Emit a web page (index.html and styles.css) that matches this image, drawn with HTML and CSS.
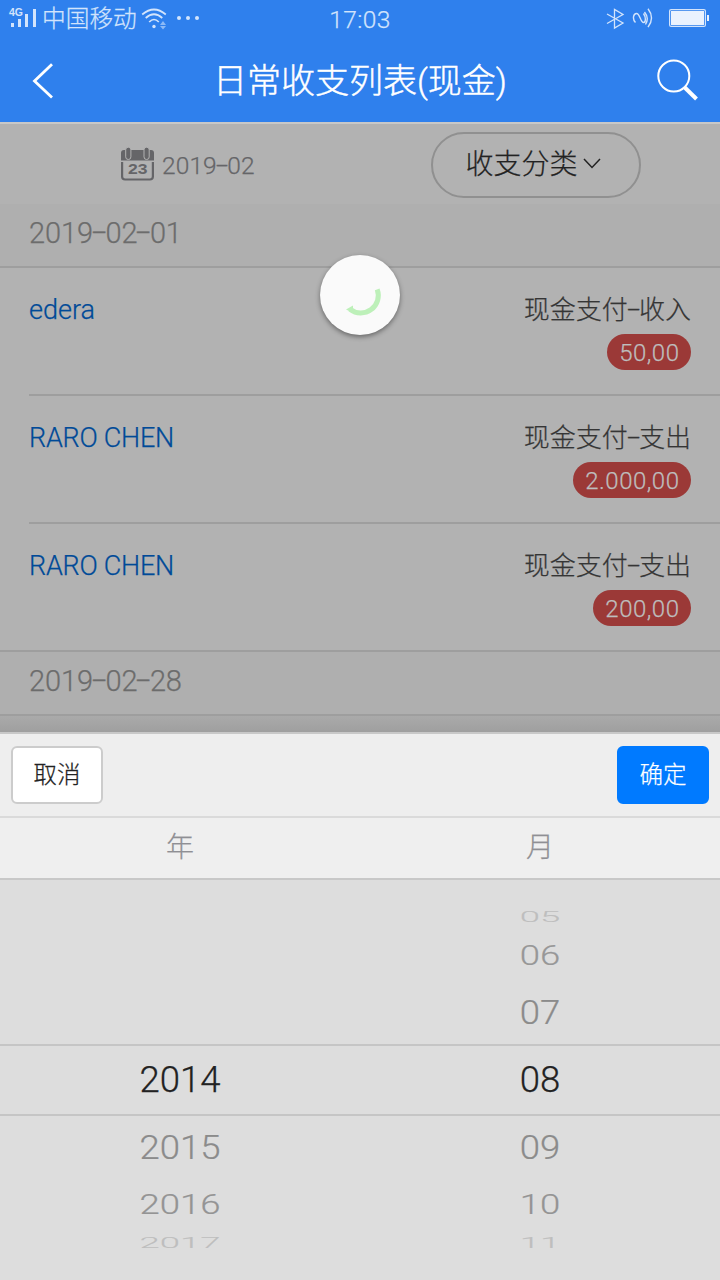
FILE: index.html
```html
<!DOCTYPE html>
<html lang="zh-CN">
<head>
<meta charset="utf-8">
<title>日常收支列表(现金)</title>
<link rel="stylesheet" href="styles.css">
</head>
<body>
<div class="screen">
  <header class="top">
    <div class="status">
      <div class="status-left">
        <svg class="signal" width="30" height="24" viewBox="0 0 30 24">
          <text class="net" x="1" y="10" textLength="14" lengthAdjust="spacingAndGlyphs">4G</text>
          <path d="M3 17h3v4H3zM10 13h3v8h-3zM17 8h3v13h-3zM25 3h3v18h-3z" fill="currentColor"/>
        </svg>
        <span class="carrier">中国移动</span>
        <svg class="wifi" width="27" height="24" viewBox="0 0 27 24" fill="none" stroke="currentColor" stroke-width="1.7">
          <path d="M1.2 8.500Q13 -1.500 24.800 8.500M4.700 12Q13 4.500 21.300 12M8.200 16Q13 11 17.800 16"/>
          <circle cx="13" cy="20.500" r="1.700" fill="currentColor" stroke="none"/>
          <path class="faint" d="M22 15l3 4h-6zM22 23.500l3-3.500h-6z"/>
        </svg>
        <svg class="dots" width="24" height="6" viewBox="0 0 24 6" fill="currentColor"><circle cx="3" cy="3" r="2"/><circle cx="12" cy="3" r="2"/><circle cx="21" cy="3" r="2"/></svg>
      </div>
      <div class="clock">17:03</div>
      <div class="status-right">
        <svg width="19" height="22" viewBox="0 0 19 22" fill="none" stroke="currentColor" stroke-width="1.300"><path d="M1 6l16 9-8.500 5V1.500L17 6.500 1 15.500"/></svg>
        <svg class="nfc" width="23" height="22" viewBox="0 0 23 22" fill="none" stroke="currentColor" stroke-width="1.400"><path d="M3.500 14.500C0 11 1.500 5.500 4.500 5.500c3.500 0 4 9 7 9 2.500 0 2.500-5.500 0-9M12.500 4q5 6 1 12.500M16 .8q7 9 0 18.400"/></svg>
        <svg class="battery" width="40" height="18" viewBox="0 0 40 18"><rect x=".6" y=".6" width="35.800" height="16.800" rx="1.500" fill="none" stroke="currentColor" stroke-width="1.200"/><path d="M2 2h33v14H2zM38 6h2v6h-2z" fill="#eaf2fe"/></svg>
      </div>
    </div>
    <div class="nav">
      <svg class="back" width="22" height="36" viewBox="0 0 22 36" fill="none" stroke="#fff" stroke-width="2.800"><path d="M20 1.200L2.500 18 20 34.500"/></svg>
      <h1 class="title">日常收支列表(现金)</h1>
      <svg class="search" width="42" height="42" viewBox="0 0 42 42" fill="none" stroke="#fff"><circle cx="16.800" cy="17" r="15.500" stroke-width="2"/><path d="M27.500 28.200L39.500 40" stroke-width="4"/></svg>
    </div>
  </header>

  <main class="list">
    <div class="filters">
      <div class="month">
        <svg width="34" height="34" viewBox="0 0 34 34">
          <path d="M3 3h27q3 0 3 3v7.500H0V6q0-3 3-3z" fill="#656568"/>
          <path d="M1.100 15v14.500q0 3 3 3h24.800q3 0 3-3V15" fill="none" stroke="#656568" stroke-width="2.200"/>
          <rect x="4.700" y=".2" width="5.200" height="12.300" rx="2.600" fill="#656568" stroke="#b2b2b2"/>
          <rect x="23" y=".2" width="5.200" height="12.300" rx="2.600" fill="#656568" stroke="#b2b2b2"/>
          <text class="cal-day" x="7" y="26.700" textLength="19.500" lengthAdjust="spacingAndGlyphs">23</text>
        </svg>
        <span class="month-text">2019<i class="dash">-</i>02</span>
      </div>
      <button class="category">收支分类<svg width="18" height="11" viewBox="0 0 18 11" fill="none" stroke="#222" stroke-width="1.500"><path d="M1 1l8 8.500L17 1"/></svg></button>
    </div>
    <div class="group">2019<i class="dash">-</i>02<i class="dash">-</i>01</div>
    <div class="row"><div class="cell"><span class="name">edera</span><div class="info"><span class="kind">现金支付<i class="dash">-</i>收入</span><span class="badge">50,00</span></div></div></div>
    <div class="row"><div class="cell"><span class="name caps">RARO CHEN</span><div class="info"><span class="kind">现金支付<i class="dash">-</i>支出</span><span class="badge">2.000,00</span></div></div></div>
    <div class="row last"><div class="cell"><span class="name caps">RARO CHEN</span><div class="info"><span class="kind">现金支付<i class="dash">-</i>支出</span><span class="badge">200,00</span></div></div></div>
    <div class="group">2019<i class="dash">-</i>02<i class="dash">-</i>28</div>
    <div class="shade"></div>
    <div class="spinner"><svg width="80" height="80" viewBox="0 0 80 80"><path d="M57.200 34.300A17.500 17.500 0 0 1 30 54.200" fill="none" stroke="#bdf0b9" stroke-width="5"/><path d="M26 54.500L33 50.500V58z" fill="#bdf0b9"/></svg></div>
  </main>

  <section class="picker">
    <div class="actions"><button class="btn">取消</button><button class="btn ok">确定</button></div>
    <div class="heads"><span>年</span><span>月</span></div>
    <div class="wheels">
      <div class="wheel years">
        <div class="item now">2014</div><div class="item n1">2015</div><div class="item n2">2016</div><div class="item n3">2017</div>
      </div>
      <div class="wheel">
        <div class="item p3">05</div><div class="item p2">06</div><div class="item p1">07</div><div class="item now">08</div><div class="item n1">09</div><div class="item n2">10</div><div class="item n3">11</div>
      </div>
    </div>
  </section>
</div>
</body>
</html>
```
FILE: styles.css
```css
* { box-sizing: border-box; }
body { margin: 0; }
.screen {
  width: 720px; height: 1280px; overflow: hidden;
  display: flex; flex-direction: column;
  background: #b2b2b2;
  font-family: Roboto, "Noto Sans CJK SC", sans-serif;
  font-weight: 300;
  -webkit-text-stroke: .25px;
}
button { font: inherit; padding: 0; }
svg { display: block; flex: none; }
svg text { -webkit-text-stroke: 0; }

.top { height: 124px; background: #2f80ed; border-bottom: 2px solid #c8c8c8; color: #fff; }
.status { height: 38px; display: grid; grid-template-columns: 1fr auto 1fr; color: #d3e4fc; }
.status-left { display: flex; padding-left: 8px; }
.signal { margin-top: 6px; }
.net { font: 700 11px "Liberation Sans", sans-serif; fill: currentColor; }
.carrier { margin-left: 4px; font-size: 23.700px; line-height: 38px; white-space: nowrap; }
.wifi { margin: 6px 0 0 4px; }
.faint { fill: #8dbaf6; stroke: none; }
.dots { margin: 15px 0 0 8px; }
.clock { font-size: 24.500px; line-height: 40px; letter-spacing: .4px; }
.status-right { display: flex; justify-content: flex-end; padding: 8px 11px 0 0; }
.nfc { margin-left: 7px; }
.battery { margin: 1px 0 0 14px; }
.nav { height: 84px; display: flex; justify-content: space-between; padding: 0 21px 0 32px; }
.back { margin-top: 25px; }
.title { margin: 0; padding-left: 9px; font-size: 34px; font-weight: 300; line-height: 86px; -webkit-text-stroke: .45px; }
.search { margin-top: 21px; }

.list { position: relative; height: 608px; display: flex; flex-direction: column; }
.filters { height: 80px; flex: none; display: grid; grid-template-columns: 431px 210px; }
.month { display: flex; padding: 23px 0 0 121px; color: #656568; }
.month-text { margin-left: 7px; font-size: 24.500px; line-height: 37px; letter-spacing: .1px; }
.cal-day { font: 700 15px "Liberation Sans", sans-serif; fill: #656568; }
.category {
  display: flex; justify-content: center; height: 66px; margin-top: 8px; padding-right: 6px;
  border: 2px solid #909090; border-radius: 33px; background: none;
  color: #222; font-size: 28px; line-height: 61px;
}
.category svg { margin: 24px 0 0 5px; }
.dash { display: inline-block; font-style: normal; width: .43em; text-align: center; transform: translateY(-.03em) scaleX(1.800); }
.group {
  height: 64px; flex: none; padding-left: 29px; background: #afafaf;
  border-bottom: 2px solid #9e9e9e; color: #6c6c6c;
  font-size: 29px; line-height: 58px; letter-spacing: -.1px;
}
.row { height: 128px; flex: none; padding-left: 29px; }
.cell { height: 128px; display: flex; justify-content: space-between; padding: 22px 29px 0 0; border-bottom: 2px solid #9e9e9e; }
.last { padding-left: 0; }
.last .cell { padding-left: 29px; }
.name { color: #004a98; font-size: 27px; line-height: 40px; }
.caps { letter-spacing: -.25px; }
.info { display: flex; flex-direction: column; align-items: flex-end; }
.kind { height: 38px; color: #353535; font-size: 26px; line-height: 40px; }
.badge {
  height: 36px; margin-top: 6px; padding: 0 11.500px 0 12px; border-radius: 18px;
  background: #9b3937; color: #bebebe; font-size: 24px; line-height: 38px; letter-spacing: .5px;
}
.shade { flex: 1; background: linear-gradient(#aaa, #9f9f9f); }
.spinner {
  position: absolute; left: 320px; top: 131px; width: 80px; height: 80px;
  border-radius: 50%; background: #fafafa; box-shadow: 0 2px 5px rgba(0,0,0,.42);
}

.picker { height: 548px; }
.actions { height: 86px; display: flex; justify-content: space-between; padding: 12px 11px; background: #eee; border-top: 2px solid #c8c8c8; border-bottom: 2px solid #dadada; }
.btn { width: 92px; height: 58px; border: 2px solid #ccc; border-radius: 6px; background: #fff; color: #222; font-size: 23.500px; line-height: 52px; }
.ok { border-color: #007aff; background: #007aff; color: #fff; }
.heads { height: 62px; display: grid; grid-template-columns: 1fr 1fr; text-align: center; background: #efefef; border-bottom: 2px solid #c8c8c8; color: #8f8f94; font-size: 28px; line-height: 60px; }
.heads span { height: 60px; }
.wheels {
  height: 400px; display: grid; grid-template-columns: 1fr 1fr;
  background: #ddd linear-gradient(#c5c5c5 2px, transparent 2px, transparent 70px, #c5c5c5 70px) 0 164px / 100% 72px no-repeat;
}
.wheel { padding-top: 17px; text-align: center; font-size: 36.500px; color: #8b8b8b; }
.years { padding-top: 165px; }
.item { transform-origin: center; }
.p3 { height: 36px; line-height: 43px; transform: scaleY(.41); color: #bebebe; }
.p2 { height: 44px; line-height: 47px; transform: scaleY(.74); color: #979797; }
.p1 { height: 68px; line-height: 72px; transform: scaleY(.93); }
.now { height: 70px; line-height: 69px; color: #222; }
.n1 { height: 64px; line-height: 66px; transform: scaleY(.93); }
.n2 { height: 50px; line-height: 52px; transform: scaleY(.74); color: #949494; }
.n3 { height: 28px; line-height: 29px; transform: scaleY(.41); color: #bebebe; }
```
